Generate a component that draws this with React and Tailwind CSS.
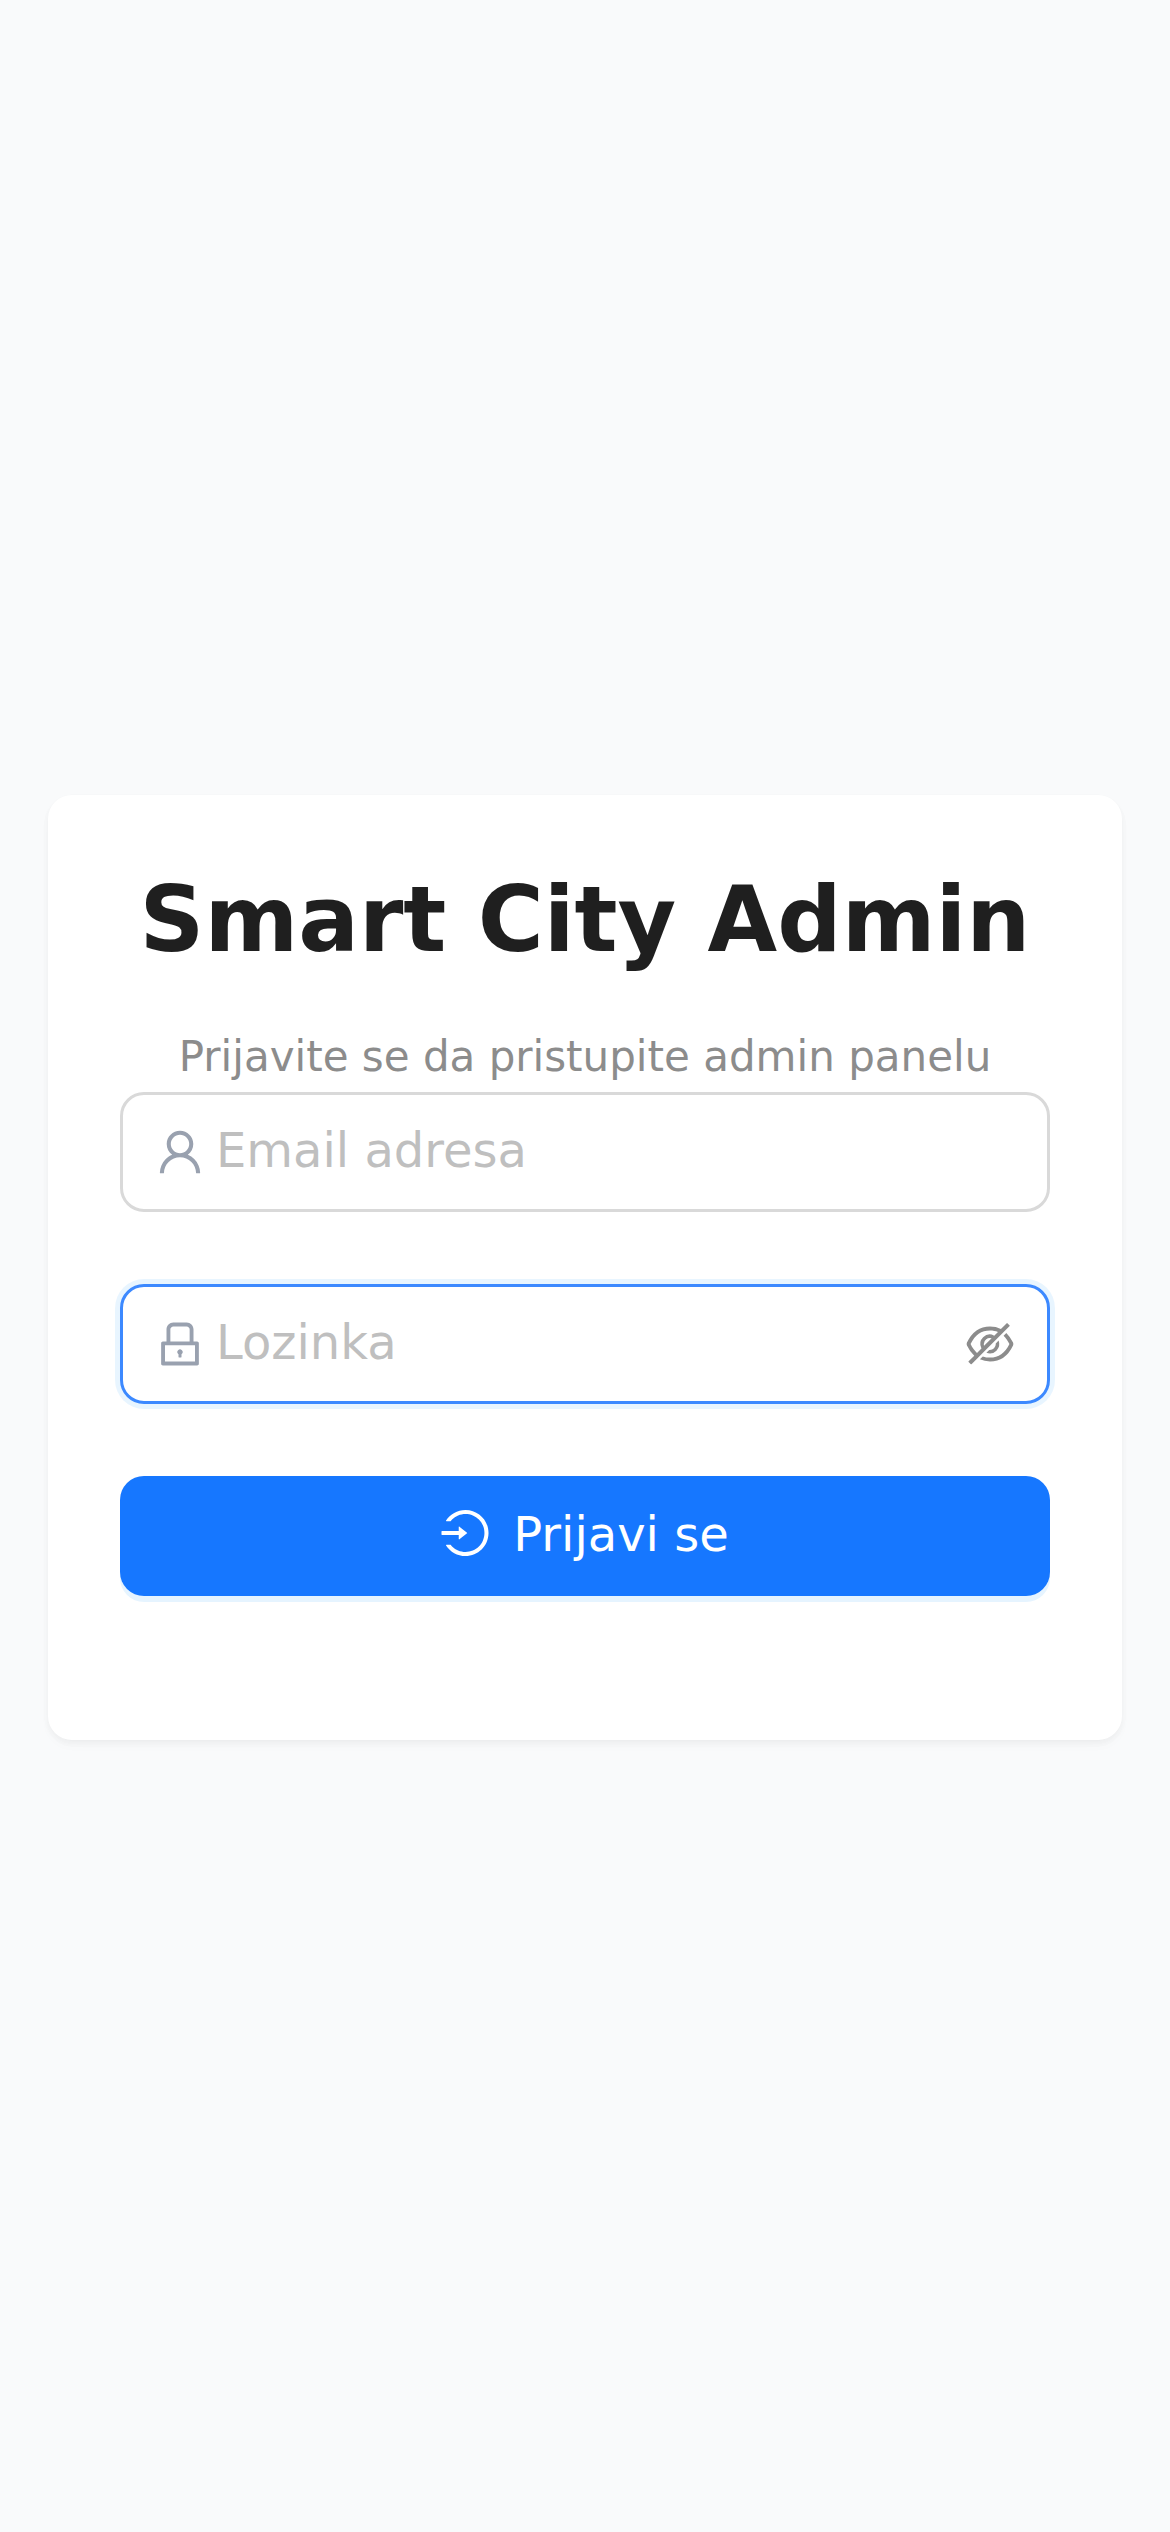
import { AiOutlineUser, AiOutlineLock, AiOutlineEyeInvisible, AiOutlineLogin } from "react-icons/ai";

const iconBox = "64 64 896 896";

export default function App() {
  return (
    <main className="flex h-[2532px] w-full flex-col bg-[#f9fafb] px-12 pt-[795px] font-['DejaVu_Sans',sans-serif] text-[#1f1f1f]">
      <section className="flex h-[945px] w-full flex-col rounded-3xl bg-white px-[72px] pt-[72px] shadow-[0_3px_6px_0_rgba(0,0,0,0.03),0_3px_18px_-3px_rgba(0,0,0,0.02),0_6px_12px_0_rgba(0,0,0,0.02)]">
        <header className="h-[225px] whitespace-nowrap text-center">
          <h1 className="text-[90px] font-bold leading-[105px]">Smart City Admin</h1>
          <p className="mt-13 text-[42px] leading-[65px] text-[#8c8c8c]">Prijavite se da pristupite admin panelu</p>
        </header>
        <form className="flex flex-col gap-[72px]">
          <label className="flex h-[120px] items-center rounded-3xl border-3 border-[#d9d9d9] bg-white px-[33px]">
            <AiOutlineUser viewBox={iconBox} className="mr-3 size-12 shrink-0 text-gray-400" />
            <input
              type="email"
              placeholder="Email adresa"
              className="h-[72px] min-w-0 flex-1 pb-1 text-5xl leading-[68px] outline-none placeholder:text-[#bfbfbf]"
            />
          </label>
          <label className="flex h-[120px] items-center rounded-3xl border-3 border-[#3c89ff] bg-white px-[33px] shadow-[0_0_0_5px_rgba(5,145,255,0.09)]">
            <AiOutlineLock viewBox={iconBox} className="mr-3 size-12 shrink-0 text-gray-400" />
            <input
              type="password"
              placeholder="Lozinka"
              className="h-[72px] min-w-0 flex-1 pb-1 text-5xl leading-[68px] outline-none placeholder:text-[#bfbfbf]"
            />
            <AiOutlineEyeInvisible viewBox={iconBox} className="ml-3 size-12 shrink-0 text-[#8c8c8c]" />
          </label>
          <button
            type="button"
            className="flex h-[120px] items-center justify-center gap-6 rounded-3xl bg-[#1677ff] text-5xl leading-[72px] text-white shadow-[0_6px_0_rgba(5,145,255,0.1)]"
          >
            <AiOutlineLogin viewBox={iconBox} className="mb-1.5 size-12" />
            <span className="pb-1">Prijavi se</span>
          </button>
        </form>
      </section>
    </main>
  );
}
